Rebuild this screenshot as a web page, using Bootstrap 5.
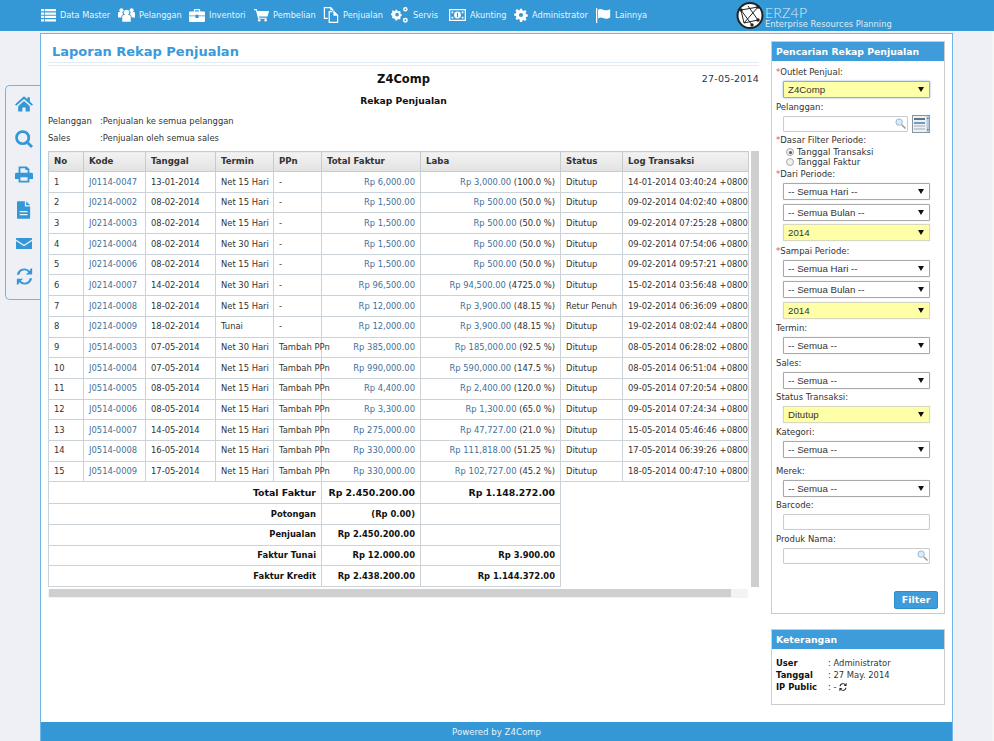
<!DOCTYPE html>
<html lang="id">
<head>
  <meta charset="UTF-8" />
  <meta name="viewport" content="width=device-width, initial-scale=1.0" />
  <title>Laporan Rekap Penjualan</title>
  <link href="https://cdn.jsdelivr.net/npm/bootstrap@5.3.0/dist/css/bootstrap.min.css" rel="stylesheet">
  <style>
    html, body { height: 741px; overflow: hidden; }
    body { background: #eef0f6; font-family: "DejaVu Sans", Verdana, sans-serif; font-size: 8.4px; color: #333; box-shadow: inset -2px 0 0 #f5f5f5; }
    .topbar { height: 31px; background: #3498d6; color: #eaf4fb; margin-bottom: 2px; padding-left: 41px; }
    .topmenu { height: 30px; width: 695px; flex: none; }
    .topitem { gap: 4px; font-size: 8.2px; }
    .topitem svg { fill: #fff; display: block; }
    .t-data { width: 77px; } .t-pel { width: 71px; } .t-inv { width: 65px; } .t-beli { width: 69px; }
    .t-jual { width: 68px; } .t-serv { width: 58px; } .t-aku { width: 65px; } .t-adm { width: 82px; }
    .brand { height: 31px; }
    .brand svg { margin-top: 1px; margin-right: 1px; }
    .brand-text { line-height: 1; color: #dcecf7; white-space: nowrap; }
    .brand-name { font-family: Lato, sans-serif; font-size: 14px; letter-spacing: .2px; font-weight: 300; margin-top: 7px; line-height: 12px; height: 12px; }
    .brand-sub { font-size: 8.35px; line-height: 10px; }
    .rail { width: 40px; flex: none; padding: 52px 0 0 5px; }
    .sidetab { height: 215px; width: 35px; background: #eef0f6; border: 1px solid #6fb6e6; border-right: 0; border-radius: 5px 0 0 5px; padding: 9px 0 0 2px; gap: 18px; align-items: center; }
    .sidetab svg { fill: #3498d6; display: block; }
    .shell { width: 913px; height: 708px; background: #fff; border: 1px solid #6fb6e6; border-bottom: 0; flex: none; }
    .shell-body { height: 688px; padding: 7px 7px 0 7px; gap: 12px; }
    .report { width: 711px; flex: none; }
    .report-title { color: #3a9ad9; font-size: 13px; font-weight: 700; padding-left: 4px; line-height: 22px; height: 21px; }
    .title-rule { height: 4px; border-top: 1.5px solid #dfecf5; border-bottom: 1.5px solid #dfecf5; }
    .outlet-line { height: 22px; margin-top: 2px; margin-bottom: 1px; position: relative; }
    .outlet-name { font-size: 11.5px; font-weight: 700; color: #111; text-align: center; line-height: 22px; }
    .print-date { position: absolute; right: 0; top: 4px; font-size: 9.5px; letter-spacing: .2px; }
    .report-sub { font-size: 9.2px; font-weight: 700; color: #111; text-align: center; line-height: 20px; margin-top: 1px; height: 20px; }
    .meta-row { line-height: 17px; }
    .meta-first { margin-top: 2px; }
    .meta-key { width: 52px; }
    .grid-wrap { margin-top: 4px; }
    .rekap { table-layout: fixed; width: 700px; border-collapse: collapse; margin: 0; flex: none; }
    .rekap th, .rekap td { border: 1px solid #ccd3d8; padding: 0 5px; height: 20.7px; white-space: nowrap; vertical-align: middle; color: #333; }
    .rekap th { font-weight: 700; font-size: 8.6px; background: linear-gradient(#f3f3f3, #e2e2e2); height: 20px; border-color: #c6cbce; }
    .rekap a { color: #3f7199; text-decoration: none; }
    .num { text-align: right; }
    .rekap .sum-big { font-size: 9.4px; font-weight: 700; color: #111; height: 22px; text-align: right; }
    .rekap .sum { font-weight: 700; color: #111; text-align: right; height: 20.6px; }
    .rekap .nob { border: 0; }
    .rekap .ppn-over { overflow: visible; }
    .w-no { width: 35px; } .w-kode { width: 62px; } .w-tgl { width: 70px; } .w-term { width: 58px; } .w-ppn { width: 48px; }
    .w-tot { width: 99px; } .w-laba { width: 140px; } .w-stat { width: 62px; } .w-log { width: 126px; }
    .vbar { width: 8px; margin-left: 2px; background: #cfcfcf; }
    .hbar-track { width: 700px; height: 9px; background: #f3f3f3; margin-top: 2px; }
    .hbar { width: 682px; height: 8px; background: #cfcfcf; margin-left: 1px; }
    .sidecol { width: 174px; flex: none; }
    .box { border: 1px solid #ccc; background: #fff; }
    .box-head { background: #3d9cd9; color: #fff; font-size: 9.3px; font-weight: 700; height: 19px; line-height: 19px; padding-left: 4px; }
    .search-box { height: 573px; }
    .search-body { padding: 6px 6px 0 4px; }
    .fld-label { display: block; line-height: 11px; margin: 0 0 3px 0; font-size: 8.5px; }
    .req { color: #d9534f; }
    .ctl { display: block; margin-left: 7px; width: 147px; height: 17px; border: 1px solid #a9a9a9; border-radius: 1px; box-shadow: 0 0 1px #bbb; font-family: "Liberation Sans", Arial, sans-serif; font-size: 9.7px; line-height: 15px; padding: 0 0 0 4px; color: #333; background-color: #fff; }
    input.ctl { height: 16px; border-color: #ccc; box-shadow: inset 0 0 1px #ddd; }
    select.ctl { appearance: none; -webkit-appearance: none; background-image: url("data:image/svg+xml,%3Csvg xmlns='http://www.w3.org/2000/svg' width='6' height='5'%3E%3Cpath d='M0 0h6L3 5z' fill='%23111'/%3E%3C/svg%3E"); background-repeat: no-repeat; background-position: right 5px center; margin-bottom: 3.8px; }
    .ctl-wish { background-color: #ffffa8; border-color: #d8d8c0; }
    .ctl-focus { border-color: #7db4e8; box-shadow: 0 0 2px #6aa9e8; }
    .ctl-wrap { position: relative; width: 147px; margin-left: 7px; }
    .ctl-wrap .ctl { margin-left: 0; }
    .pel-row { gap: 4px; margin-bottom: 2px; margin-left: 7px; }
    .pel-wrap { position: relative; width: 125px; }
    .pel-wrap .ctl { margin-left: 0; width: 125px; }
    .picker { display: block; margin-top: -1px; }
    .lens { position: absolute; right: 2px; top: 2px; }
    .radio-line { gap: 3px; margin-left: 10px; line-height: 10px; height: 10px; font-size: 8.7px; }
    .radio-first { margin-top: -1.5px; }
    .radio-last { margin-bottom: 1.5px; }
    .radio-dot { width: 8px; height: 8px; border: 1px solid #aaa; border-radius: 50%; background: #f0f0f0; position: relative; }
    .radio-on::after { content: ""; position: absolute; left: 1.5px; top: 1.5px; width: 3px; height: 3px; border-radius: 50%; background: #555; }
    select.gap-year { margin-bottom: 5px; }
    select.gap-cat { margin-bottom: 8px; }
    select.gap-mrk { margin-bottom: 3px; }
    .gap-bar { margin-bottom: 3.5px; }
    .filter-row { margin-top: 27px; }
    .btn-filter { --bs-btn-padding-y: 0; --bs-btn-padding-x: 0; width: 44px; height: 18px; font-size: 9.5px; font-weight: 700; background: #3d9cd9; border-color: #2f8ccb; color: #fff; border-radius: 2px; line-height: 16px; }
    .info-box { height: 75.5px; margin-top: 15px; }
    .info-body { padding: 8px 4px; line-height: 12px; }
    .info-key { width: 52px; font-weight: 700; color: #111; }
    .sync-mini { fill: #222; vertical-align: -1px; }
    .footer-bar { height: 19px; background: #3498d6; color: #e8f3fb; text-align: center; line-height: 20px; font-size: 8.6px; }
  </style>
</head>
<body>
  <svg width="0" height="0" class="d-block">
    <defs>
      <symbol id="i-list" viewBox="0 0 20 18"><path d="M0 1h4v3H0zM5 1h15v3H5zM0 5.500h4v3H0zM5 5.500h15v3H5zM0 10h4v3H0zM5 10h15v3H5zM0 14.500h4v3H0zM5 14.500h15v3H5z"/></symbol>
      <symbol id="i-users" viewBox="0 0 20 18"><circle cx="10" cy="6" r="3.200"/><circle cx="4" cy="3.500" r="2.400"/><circle cx="16" cy="3.500" r="2.400"/><path d="M5 11q0-2 2-2h6q2 0 2 2v6H5zM0 7q0-1.500 1.500-1.500h3.500L6 8.500Q4 9 4 11v1H0zM20 7q0-1.500-1.500-1.500H15L14 8.500q2 .5 2 2.500v1h4z"/></symbol>
      <symbol id="i-case" viewBox="0 0 20 18"><path d="M7 1h6q1 0 1 1v2h-1.500V2.500h-5V4H6V2q0-1 1-1zM1 4h18q1 0 1 1v4H12V8H8v1H0V5q0-1 1-1zM0 10h8v2h4v-2h8v6q0 1-1 1H1q-1 0-1-1z"/></symbol>
      <symbol id="i-cart" viewBox="0 0 20 18"><path d="M0 1h3.500l1 2.500H20l-2 7.500H6.500l.4 1.500H17V14H5.500L2.500 2.500H0z"/><circle cx="7" cy="16" r="1.700"/><circle cx="15.500" cy="16" r="1.700"/></symbol>
      <symbol id="i-docs" viewBox="0 0 20 20"><path fill-rule="evenodd" d="M1 0h9l3 3v3h-1.500V4H9V1.500H2.500v12H6V15H1zM7 5h7l5 5v10H7zM8.500 6.500v12h9V11H13V6.500z"/></symbol>
      <symbol id="i-cogs" viewBox="0 0 20 18"><path fill-rule="evenodd" d="M6 4l1.500-.6.500-1.400h2l.5 1.400L12 4l1.400-.6 1.400 1.400-.6 1.400.6 1.300 1.400.5v2l-1.400.5-.6 1.400.6 1.400-1.400 1.400-1.400-.6-1.500.6-.5 1.400H8l-.5-1.400L6 13l-1.400.6-1.400-1.400.6-1.400L3.200 9.400l-1.400-.5v-2l1.400-.5.6-1.300-.6-1.400 1.400-1.400z" transform="translate(-1.800 1.500) scale(.85)"/><circle cx="6.700" cy="8.600" r="2" fill="#3498d6"/><path fill-rule="evenodd" d="M16 0a2.600 2.600 0 1 1 0 5.200A2.600 2.600 0 0 1 16 0zm0 1.600a1 1 0 1 0 0 2 1 1 0 0 0 0-2zM16 12a2.800 2.800 0 1 1 0 5.600 2.800 2.800 0 0 1 0-5.600zm0 1.700a1.100 1.100 0 1 0 0 2.200 1.100 1.100 0 0 0 0-2.200z"/></symbol>
      <symbol id="i-money" viewBox="0 0 20 16"><path fill-rule="evenodd" d="M0 1h20v14H0zM1.500 2.500v11h17v-11z"/><circle cx="10" cy="8" r="4"/><path d="M3 4h2v2H3zM15 4h2v2h-2zM3 10h2v2H3zM15 10h2v2h-2z"/><path d="M9.300 5.500h1.400v5H9.300z" fill="#3498d6"/></symbol>
      <symbol id="i-cog" viewBox="-1 -1 20 20"><path fill-rule="evenodd" d="M7.500 0h3l.5 2.500 1.600.7 2.200-1.400 2.100 2.100-1.400 2.200.7 1.600 2.500.5v3l-2.500.5-.7 1.600 1.400 2.200-2.100 2.100-2.200-1.400-1.600.7-.5 2.500h-3L7 15.500l-1.600-.7-2.200 1.400-2.100-2.100 1.400-2.200-.7-1.600L-.7 10V7l2.500-.5.700-1.600-1.400-2.200 2.100-2.100 2.200 1.400L7 2.500zM9 6a3 3 0 1 0 0 6 3 3 0 0 0 0-6z"/></symbol>
      <symbol id="i-flag" viewBox="0 0 18 18"><path d="M0 0h1.500v18H0zM2.500 2q3-1.500 6 0t7 0q1-.4 1.500-.5v10q-1 .5-2.500 1-3 .8-6-.5t-6 .5z"/></symbol>
      <symbol id="i-home" viewBox="0 0 20 18"><path d="M10 1L0 10l1.400 1.500L10 4l8.600 7.500L20 10l-3.500-3.200V2h-2.700v2.300zM3.500 12v6h4.700v-4.500h3.600V18h4.700v-6L10 6.200z"/></symbol>
      <symbol id="i-search" viewBox="0 0 20 20"><circle cx="8.500" cy="8.500" r="6.800" fill="none" stroke="#3498d6" stroke-width="3"/><path d="M13 15.200l2.200-2.200 4.800 4.800-2.200 2.200z"/></symbol>
      <symbol id="i-print" viewBox="0 0 20 18"><path fill-rule="evenodd" d="M4 0h9l3 3v4h-2V4h-2.500V2H6v5H4zM1.500 7h17Q20 7 20 8.500V14h-4v4H4v-4H0V8.500Q0 7 1.500 7zM6 12v4h8v-4z"/></symbol>
      <symbol id="i-file" viewBox="0 0 16 20"><path fill-rule="evenodd" d="M1 0h8v6h6v13q0 1-1 1H1q-1 0-1-1V1q0-1 1-1zM3 11v1.500h9V11zM3 14.500V16h9v-1.500z"/><path d="M10.500 0L15 4.500h-4.500z"/></symbol>
      <symbol id="i-mail" viewBox="0 0 20 16"><path d="M0 1h20v2l-10 6.500L0 3zM0 5l10 6.500L20 5v10H0z"/></symbol>
      <symbol id="i-sync" viewBox="0 0 20 20"><path d="M16.500 1.500L19 0v7.500h-7.500l3-2.600A6 6 0 0 0 4 8H1A9 9 0 0 1 16.500 3.500zM3.500 18.500L1 20v-7.500h7.500l-3 2.600A6 6 0 0 0 16 12h3a9 9 0 0 1-15.500 4.500z"/></symbol>
      <symbol id="i-lens" viewBox="0 0 12 12"><circle cx="4.500" cy="4.500" r="3.500" fill="#dcebf7" stroke="#8fb4d4"/><path d="M7.500 7.500L11.500 11.500" stroke="#9a9a9a" stroke-width="1.600"/></symbol>
    </defs>
  </svg>

  <div class="topbar d-flex align-items-start">
    <div class="topmenu d-flex align-items-center">
      <div class="topitem t-data d-flex align-items-center"><svg width="15" height="14"><use href="#i-list"/></svg>Data Master</div>
      <div class="topitem t-pel d-flex align-items-center"><svg width="17" height="16"><use href="#i-users"/></svg>Pelanggan</div>
      <div class="topitem t-inv d-flex align-items-center"><svg width="16" height="15"><use href="#i-case"/></svg>Inventori</div>
      <div class="topitem t-beli d-flex align-items-center"><svg width="15" height="14"><use href="#i-cart"/></svg>Pembelian</div>
      <div class="topitem t-jual d-flex align-items-center"><svg width="16" height="16"><use href="#i-docs"/></svg>Penjualan</div>
      <div class="topitem t-serv d-flex align-items-center"><svg width="18" height="16"><use href="#i-cogs"/></svg>Servis</div>
      <div class="topitem t-aku d-flex align-items-center"><svg width="17" height="14"><use href="#i-money"/></svg>Akunting</div>
      <div class="topitem t-adm d-flex align-items-center"><svg width="14" height="14"><use href="#i-cog"/></svg>Administrator</div>
      <div class="topitem d-flex align-items-center"><svg width="15" height="15"><use href="#i-flag"/></svg>Lainnya</div>
    </div>
    <div class="brand d-flex align-items-start">
      <svg width="28" height="29" viewBox="0 0 28 29">
        <circle cx="14" cy="14.500" r="12.500" fill="#fff" stroke="#222" stroke-width="2"/>
        <g fill="none" stroke="#222" stroke-width="1"><path d="M5 9L22 6M5 9l11 15M22 6L8 22M8 22l14-3M22 19L12 5M5 9l3 13"/></g>
        <circle cx="5" cy="9" r="1.700" fill="#222"/><circle cx="22" cy="6" r="1.700" fill="#222"/><circle cx="16" cy="24" r="1.700" fill="#222"/><circle cx="22" cy="19" r="1.700" fill="#222"/>
      </svg>
      <div class="brand-text">
        <div class="brand-name">ERZ4P</div>
        <div class="brand-sub">Enterprise Resources Planning</div>
      </div>
    </div>
  </div>

  <div class="d-flex">
    <div class="rail">
      <div class="sidetab d-flex flex-column">
        <svg width="18" height="17"><use href="#i-home"/></svg>
        <svg width="18" height="18"><use href="#i-search"/></svg>
        <svg width="18" height="17"><use href="#i-print"/></svg>
        <svg width="14" height="18"><use href="#i-file"/></svg>
        <svg width="16" height="13"><use href="#i-mail"/></svg>
        <svg width="17" height="17"><use href="#i-sync"/></svg>
      </div>
    </div>

    <div class="shell">
      <div class="shell-body d-flex">
        <div class="report">
          <div class="report-title">Laporan Rekap Penjualan</div>
          <div class="title-rule"></div>
          <div class="outlet-line">
            <div class="outlet-name">Z4Comp</div>
            <div class="print-date">27-05-2014</div>
          </div>
          <div class="report-sub">Rekap Penjualan</div>
          <div class="meta-row meta-first d-flex"><div class="meta-key">Pelanggan</div><div>:Penjualan ke semua pelanggan</div></div>
          <div class="meta-row d-flex"><div class="meta-key">Sales</div><div>:Penjualan oleh semua sales</div></div>

          <div class="grid-wrap d-flex">
            <table class="rekap">
              <colgroup>
                <col class="w-no"><col class="w-kode"><col class="w-tgl"><col class="w-term"><col class="w-ppn">
                <col class="w-tot"><col class="w-laba"><col class="w-stat"><col class="w-log">
              </colgroup>
              <thead>
                <tr><th>No</th><th>Kode</th><th>Tanggal</th><th>Termin</th><th>PPn</th><th>Total Faktur</th><th>Laba</th><th>Status</th><th>Log Transaksi</th></tr>
              </thead>
              <tbody id="rows"></tbody>
              <tbody>
                <tr><td colspan="5" class="sum-big">Total Faktur</td><td class="sum-big">Rp 2.450.200.00</td><td class="sum-big">Rp 1.148.272.00</td><td colspan="2" rowspan="5" class="nob"></td></tr>
                <tr><td colspan="5" class="sum">Potongan</td><td class="sum">(Rp 0.00)</td><td class="sum"></td></tr>
                <tr><td colspan="5" class="sum">Penjualan</td><td class="sum">Rp 2.450.200.00</td><td class="sum"></td></tr>
                <tr><td colspan="5" class="sum">Faktur Tunai</td><td class="sum">Rp 12.000.00</td><td class="sum">Rp 3.900.00</td></tr>
                <tr><td colspan="5" class="sum">Faktur Kredit</td><td class="sum">Rp 2.438.200.00</td><td class="sum">Rp 1.144.372.00</td></tr>
              </tbody>
            </table>
            <div class="vbar"></div>
          </div>
          <div class="hbar-track"><div class="hbar"></div></div>
        </div>

        <div class="sidecol">
          <div class="box search-box">
            <div class="box-head">Pencarian Rekap Penjualan</div>
            <form class="search-body">
              <label class="fld-label"><span class="req">*</span>Outlet Penjual:</label>
              <select class="ctl ctl-wish ctl-focus"><option>Z4Comp</option></select>
              <label class="fld-label">Pelanggan:</label>
              <div class="pel-row d-flex">
                <div class="pel-wrap"><input type="text" class="ctl"><svg class="lens" width="11" height="11"><use href="#i-lens"/></svg></div>
                <svg class="picker" width="18" height="18" viewBox="0 0 18 18">
                  <rect x=".5" y=".5" width="17" height="17" fill="#eef1f4" stroke="#8a949c"/>
                  <path d="M2 3h11v2H2z" fill="#5f7488"/>
                  <path d="M2 7h11v2H2z" fill="#6f9cc4"/>
                  <path d="M2 11h11M2 14h11" stroke="#a2acb4"/>
                  <path d="M14.500 1h2.500v16h-2.500z" fill="#b5cbdd"/>
                  <path d="M14.800 4l1 -1.500 1 1.500zM14.800 14l1 1.500 1-1.500z" fill="#3f6f9a"/>
                </svg>
              </div>
              <label class="fld-label"><span class="req">*</span>Dasar Filter Periode:</label>
              <div class="radio-line radio-first d-flex align-items-center"><span class="radio-dot radio-on"></span>Tanggal Transaksi</div>
              <div class="radio-line radio-last d-flex align-items-center"><span class="radio-dot"></span>Tanggal Faktur</div>
              <label class="fld-label"><span class="req">*</span>Dari Periode:</label>
              <select class="ctl"><option>-- Semua Hari --</option></select>
              <select class="ctl"><option>-- Semua Bulan --</option></select>
              <select class="ctl ctl-wish gap-year"><option>2014</option></select>
              <label class="fld-label"><span class="req">*</span>Sampai Periode:</label>
              <select class="ctl"><option>-- Semua Hari --</option></select>
              <select class="ctl"><option>-- Semua Bulan --</option></select>
              <select class="ctl ctl-wish"><option>2014</option></select>
              <label class="fld-label">Termin:</label>
              <select class="ctl"><option>-- Semua --</option></select>
              <label class="fld-label">Sales:</label>
              <select class="ctl"><option>-- Semua --</option></select>
              <label class="fld-label">Status Transaksi:</label>
              <select class="ctl ctl-wish"><option>Ditutup</option></select>
              <label class="fld-label">Kategori:</label>
              <select class="ctl gap-cat"><option>-- Semua --</option></select>
              <label class="fld-label">Merek:</label>
              <select class="ctl gap-mrk"><option>-- Semua --</option></select>
              <label class="fld-label">Barcode:</label>
              <input type="text" class="ctl gap-bar">
              <label class="fld-label">Produk Nama:</label>
              <div class="ctl-wrap"><input type="text" class="ctl"><svg class="lens" width="11" height="11"><use href="#i-lens"/></svg></div>
              <div class="filter-row d-flex justify-content-end"><button type="button" class="btn btn-filter">Filter</button></div>
            </form>
          </div>
          <div class="box info-box">
            <div class="box-head">Keterangan</div>
            <div class="info-body">
              <div class="d-flex"><div class="info-key">User</div><div>: Administrator</div></div>
              <div class="d-flex"><div class="info-key">Tanggal</div><div>: 27 May. 2014</div></div>
              <div class="d-flex"><div class="info-key">IP Public</div><div>: - <svg class="sync-mini" width="8" height="8"><use href="#i-sync"/></svg></div></div>
            </div>
          </div>
        </div>
      </div>
      <div class="footer-bar">Powered by Z4Comp</div>
    </div>
  </div>

  <script src="https://cdn.jsdelivr.net/npm/bootstrap@5.3.0/dist/js/bootstrap.bundle.min.js"></script>
  <script>
    const data = [
      ['J0114-0047','13-01-2014','Net 15 Hari','-','6,000.00','3,000.00','100.0','Ditutup','14-01-2014 03:40:24'],
      ['J0214-0002','08-02-2014','Net 15 Hari','-','1,500.00','500.00','50.0','Ditutup','09-02-2014 04:02:40'],
      ['J0214-0003','08-02-2014','Net 15 Hari','-','1,500.00','500.00','50.0','Ditutup','09-02-2014 07:25:28'],
      ['J0214-0004','08-02-2014','Net 30 Hari','-','1,500.00','500.00','50.0','Ditutup','09-02-2014 07:54:06'],
      ['J0214-0006','08-02-2014','Net 15 Hari','-','1,500.00','500.00','50.0','Ditutup','09-02-2014 09:57:21'],
      ['J0214-0007','14-02-2014','Net 30 Hari','-','96,500.00','94,500.00','4725.0','Ditutup','15-02-2014 03:56:48'],
      ['J0214-0008','18-02-2014','Net 15 Hari','-','12,000.00','3,900.00','48.15','Retur Penuh','19-02-2014 06:36:09'],
      ['J0214-0009','18-02-2014','Tunai','-','12,000.00','3,900.00','48.15','Ditutup','19-02-2014 08:02:44'],
      ['J0514-0003','07-05-2014','Net 30 Hari','Tambah PPn','385,000.00','185,000.00','92.5','Ditutup','08-05-2014 06:28:02'],
      ['J0514-0004','07-05-2014','Net 15 Hari','Tambah PPn','990,000.00','590,000.00','147.5','Ditutup','08-05-2014 06:51:04'],
      ['J0514-0005','08-05-2014','Net 15 Hari','Tambah PPn','4,400.00','2,400.00','120.0','Ditutup','09-05-2014 07:20:54'],
      ['J0514-0006','08-05-2014','Net 15 Hari','Tambah PPn','3,300.00','1,300.00','65.0','Ditutup','09-05-2014 07:24:34'],
      ['J0514-0007','14-05-2014','Net 15 Hari','Tambah PPn','275,000.00','47,727.00','21.0','Ditutup','15-05-2014 05:46:46'],
      ['J0514-0008','16-05-2014','Net 15 Hari','Tambah PPn','330,000.00','111,818.00','51.25','Ditutup','17-05-2014 06:39:26'],
      ['J0514-0009','17-05-2014','Net 15 Hari','Tambah PPn','330,000.00','102,727.00','45.2','Ditutup','18-05-2014 00:47:10']
    ];
    document.getElementById('rows').innerHTML = data.map((d, i) => `<tr>
      <td>${i + 1}</td><td><a href="#">${d[0]}</a></td><td>${d[1]}</td><td>${d[2]}</td><td class="ppn-over">${d[3]}</td>
      <td class="num"><a href="#">Rp ${d[4]}</a></td><td class="num"><a href="#">Rp ${d[5]}</a> (${d[6]} %)</td>
      <td>${d[7]}</td><td>${d[8]} +0800</td></tr>`).join('');
  </script>
</body>
</html>
